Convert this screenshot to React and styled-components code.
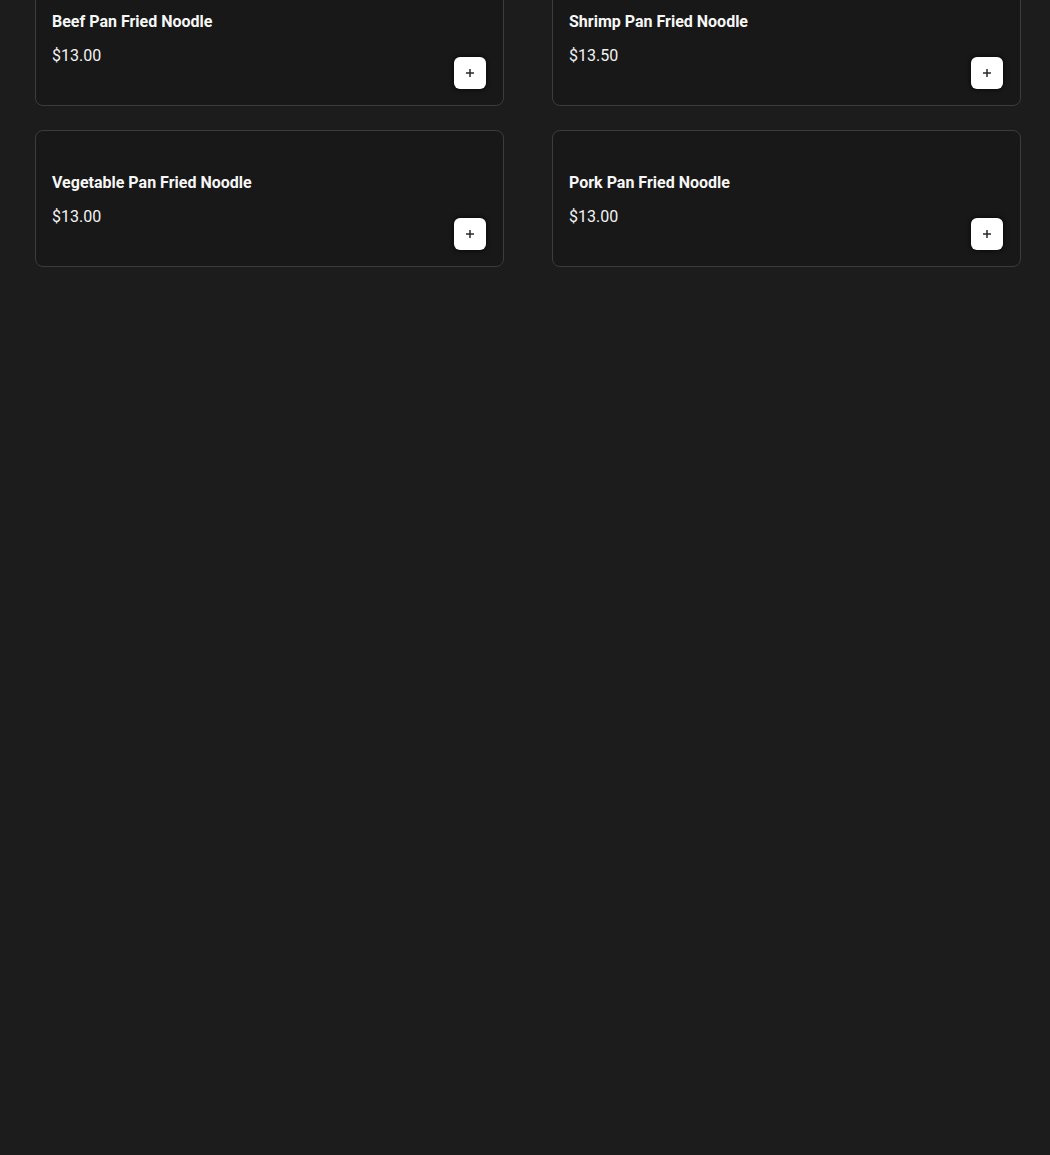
import React from 'react';
import styled, { createGlobalStyle } from 'styled-components';

const items = [
  { name: 'Beef Pan Fried Noodle', price: '$13.00' },
  { name: 'Shrimp Pan Fried Noodle', price: '$13.50' },
  { name: 'Vegetable Pan Fried Noodle', price: '$13.00' },
  { name: 'Pork Pan Fried Noodle', price: '$13.00' },
];

const App = () => {
  return (
    <>
      <GlobalStyle />
      <Page>
        <Grid>
          {items.map((item) => (
            <Card key={item.name}>
              <Spacer />
              <Title>{item.name}</Title>
              <Footer>
                <Price>{item.price}</Price>
                <AddButton aria-label={`Add ${item.name}`}>
                  <svg width="10" height="10" viewBox="0 0 10 10">
                    <path d="M5 1v8M1 5h8" stroke="#2a2a2a" strokeWidth="1.5" />
                  </svg>
                </AddButton>
              </Footer>
            </Card>
          ))}
        </Grid>
      </Page>
    </>
  );
};

const GlobalStyle = createGlobalStyle`
  html, body {
    margin: 0;
    background: #1c1c1c;
    font-family: Roboto, "Liberation Sans", sans-serif;
    overflow: hidden;
  }
`;

const Page = styled.div`
  min-height: 100vh;
  background: #1c1c1c;
  padding: 0 29px 0 35px;
`;

const Grid = styled.div`
  display: grid;
  grid-template-columns: 469px 469px;
  column-gap: 48px;
  row-gap: 24px;
  margin-top: -31px;
`;

const Card = styled.div`
  display: flex;
  flex-direction: column;
  height: 137px;
  box-sizing: border-box;
  padding: 16px 17px 16px 16px;
  background: #181818;
  border: 1px solid #3c3c3c;
  border-radius: 8px;
`;

const Spacer = styled.div`
  height: 25px;
`;

const Title = styled.div`
  color: #f7f7f7;
  font-size: 16px;
  font-weight: 700;
  line-height: 22px;
`;

const Footer = styled.div`
  display: flex;
  justify-content: space-between;
  align-items: flex-start;
  margin-top: 12px;
`;

const Price = styled.div`
  color: #f2f2f2;
  font-size: 16px;
  line-height: 22px;
`;

const AddButton = styled.button`
  display: flex;
  align-items: center;
  justify-content: center;
  width: 32px;
  height: 32px;
  margin-top: 12px;
  padding: 0;
  border: none;
  border-radius: 6px;
  background: #ffffff;
  box-shadow: 0 0 4px 1px rgba(0, 0, 0, 0.6);
  cursor: pointer;
`;

export default App;
